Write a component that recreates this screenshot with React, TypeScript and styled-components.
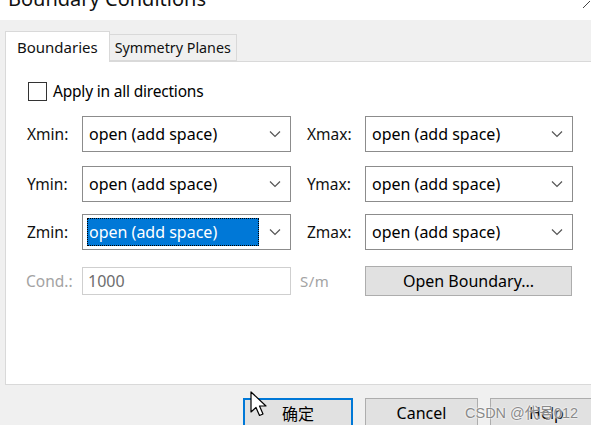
import React from 'react';
import styled, { createGlobalStyle } from 'styled-components';

const GlobalStyle = createGlobalStyle`
  html, body {
    margin: 0;
    padding: 0;
    background: #f0f0f0;
  }
  body {
    font-family: "Noto Sans", "Noto Sans CJK SC", sans-serif;
    font-size: 16px;
    color: #000;
  }
`;

const Window = styled.div`
  position: relative;
  width: 591px;
  height: 425px;
  overflow: hidden;
  background: #f0f0f0;
  display: flex;
  flex-direction: column;
`;

const TitleBar = styled.div`
  height: 20px;
  background: #ffffff;
  flex-shrink: 0;
  position: relative;
`;

const Title = styled.div`
  margin: -11px 0 0 8px;
  font-size: 20px;
  line-height: 20px;
  color: #111;
  white-space: nowrap;
`;

const CloseMark = styled.svg`
  position: absolute;
  right: 0;
  top: 0;
`;

const Body = styled.div`
  padding: 11px 0 0 5px;
  display: flex;
  flex-direction: column;
`;

const TabStrip = styled.div`
  display: flex;
  align-items: flex-end;
  height: 30px;
  position: relative;
  z-index: 1;
`;

const Tab = styled.div<{ $active?: boolean }>`
  box-sizing: border-box;
  height: ${({ $active }) => ($active ? '31px' : '27px')};
  margin-bottom: ${({ $active }) => ($active ? '-1px' : '0')};
  padding: ${({ $active }) => ($active ? '0 11px' : '0 5px')};
  display: flex;
  align-items: center;
  background: ${({ $active }) => ($active ? '#ffffff' : '#f0f0f0')};
  border: 1px solid #d9d9d9;
  border-bottom: ${({ $active }) => ($active ? 'none' : '1px solid #d9d9d9')};
  border-left: ${({ $active }) => ($active ? '1px solid #d9d9d9' : 'none')};
  font-size: ${({ $active }) => ($active ? '15px' : '14.3px')};
  white-space: nowrap;
  color: #111;
`;

const Panel = styled.div`
  box-sizing: border-box;
  width: 600px;
  height: 324px;
  background: #ffffff;
  border: 1px solid #d9d9d9;
  padding: 20px 0 0 20px;
  display: flex;
  flex-direction: column;
`;

const CheckRow = styled.label`
  display: flex;
  align-items: center;
  gap: 6px;
  margin-left: 2px;
  height: 18px;
  font-size: 15.5px;
  letter-spacing: -0.2px;
`;

const CheckBox = styled.span`
  box-sizing: border-box;
  width: 19px;
  height: 19px;
  border: 1px solid #333;
  background: #fff;
`;

const FieldRow = styled.div<{ $top: number }>`
  display: flex;
  align-items: center;
  margin-top: ${({ $top }) => $top}px;
`;

const Label = styled.div<{ $disabled?: boolean; $w: number; $pad?: number }>`
  width: ${({ $w }) => $w}px;
  padding-left: ${({ $pad }) => $pad ?? 0}px;
  box-sizing: border-box;
  flex-shrink: 0;
  font-size: 15.5px;
  color: ${({ $disabled }) => ($disabled ? '#a3a3a3' : '#111')};
`;

const Select = styled.div<{ $w: number }>`
  box-sizing: border-box;
  width: ${({ $w }) => $w}px;
  height: 36px;
  border: 1px solid #8c8c8c;
  background: #fff;
  display: flex;
  align-items: center;
  padding: 0 9px 0 4px;
  flex-shrink: 0;
`;

const Value = styled.div<{ $selected?: boolean }>`
  flex: 1;
  height: 28px;
  box-sizing: border-box;
  display: flex;
  align-items: center;
  padding-left: 1px;
  font-size: 16px;
  white-space: nowrap;
  color: ${({ $selected }) => ($selected ? '#fff' : '#000')};
  background: ${({ $selected }) => ($selected ? '#0078d7' : 'transparent')};
  border: 1px dotted ${({ $selected }) => ($selected ? '#000' : 'transparent')};
  margin-right: 10px;
`;

const Input = styled.div`
  box-sizing: border-box;
  width: 209px;
  height: 28px;
  border: 1px solid #cfcfcf;
  background: #fff;
  display: flex;
  align-items: center;
  padding-left: 5px;
  color: #6d6d6d;
  font-size: 16px;
  flex-shrink: 0;
`;

const Unit = styled.div`
  width: 74px;
  padding-left: 9px;
  box-sizing: border-box;
  color: #a3a3a3;
  font-size: 15px;
  letter-spacing: 0.5px;
`;

const Button = styled.div<{ $w: number; $default?: boolean }>`
  box-sizing: border-box;
  width: ${({ $w }) => $w}px;
  height: 30px;
  flex-shrink: 0;
  background: #e1e1e1;
  border: ${({ $default }) => ($default ? '2px solid #0078d7' : '1px solid #adadad')};
  display: flex;
  align-items: center;
  justify-content: center;
  font-size: 16px;
  color: #000;
  white-space: nowrap;
`;

const Footer = styled.div`
  display: flex;
  gap: 12px;
  margin: 13px 0 0 238px;
`;

const Watermark = styled.div`
  position: absolute;
  left: 465px;
  top: 401px;
  font-family: "Liberation Sans", "Noto Sans CJK SC", sans-serif;
  font-size: 14.5px;
  color: #8a8a8a;
  text-shadow: 0 0 2px #fff, 0 0 2px #fff;
  white-space: nowrap;
`;

const Cursor = styled.svg`
  position: absolute;
  left: 250px;
  top: 391px;
`;

const Chevron = () => (
  <svg width="12" height="8" viewBox="0 0 12 8">
    <path d="M1 1.5 L6 6.5 L11 1.5" fill="none" stroke="#555" strokeWidth="1.2" />
  </svg>
);

type DropProps = { label: string; right?: boolean; selected?: boolean };

const Drop: React.FC<DropProps> = ({ label, right, selected }) => (
  <>
    <Label $w={right ? 74 : 56} $pad={right ? 16 : 1}>{label}</Label>
    <Select $w={right ? 208 : 209}>
      <Value $selected={selected}>open (add space)</Value>
      <Chevron />
    </Select>
  </>
);

const App: React.FC = () => (
  <>
    <GlobalStyle />
    <Window>
      <TitleBar>
        <Title>Boundary Conditions</Title>
        <CloseMark width="10" height="8" viewBox="0 0 10 8">
          <path d="M2 8 L9 1" stroke="#444" strokeWidth="1" />
        </CloseMark>
      </TitleBar>
      <Body>
        <TabStrip>
          <Tab $active>Boundaries</Tab>
          <Tab>Symmetry Planes</Tab>
        </TabStrip>
        <Panel>
          <CheckRow>
            <CheckBox />
            Apply in all directions
          </CheckRow>
          <FieldRow $top={16}>
            <Drop label="Xmin:" />
            <Drop label="Xmax:" right />
          </FieldRow>
          <FieldRow $top={14}>
            <Drop label="Ymin:" />
            <Drop label="Ymax:" right />
          </FieldRow>
          <FieldRow $top={12}>
            <Drop label="Zmin:" selected />
            <Drop label="Zmax:" right />
          </FieldRow>
          <FieldRow $top={16}>
            <Label $w={56} $disabled>Cond.:</Label>
            <Input>1000</Input>
            <Unit>S/m</Unit>
            <Button $w={207}>Open Boundary...</Button>
          </FieldRow>
        </Panel>
        <Footer>
          <Button $w={110} $default>确定</Button>
          <Button $w={113}>Cancel</Button>
          <Button $w={113}>Help</Button>
        </Footer>
      </Body>
      <Cursor width="20" height="28" viewBox="0 0 20 28">
        <path
          d="M1 1 L1 21 L6 16.5 L9.5 24.5 L13 23 L9.5 15 L16 15 Z"
          fill="#fff"
          stroke="#000"
          strokeWidth="1.2"
          strokeLinejoin="round"
        />
      </Cursor>
      <Watermark>CSDN @代号012</Watermark>
    </Window>
  </>
);

export default App;
